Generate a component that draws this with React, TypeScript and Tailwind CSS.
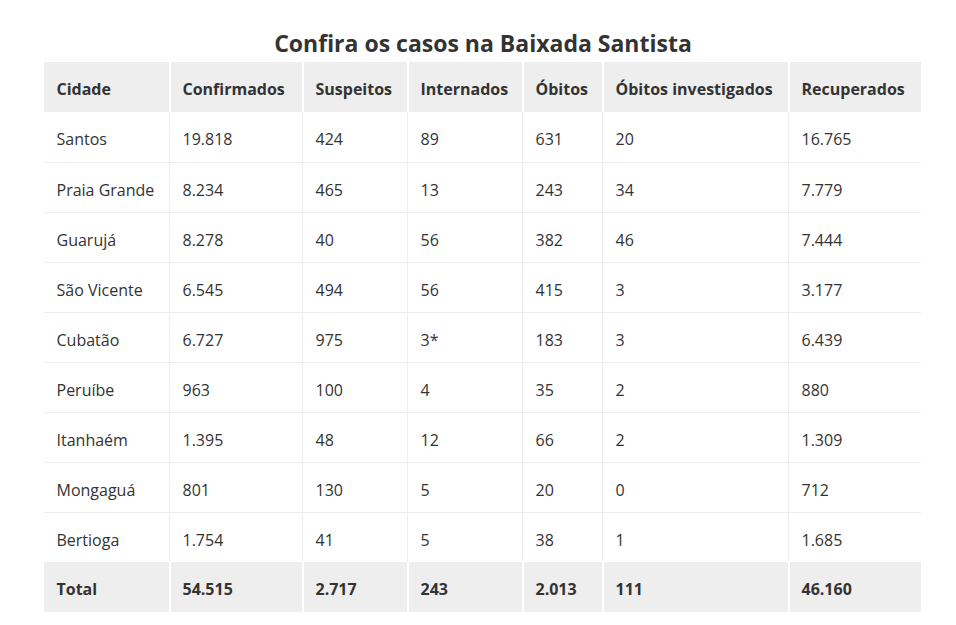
const headers = ["Cidade", "Confirmados", "Suspeitos", "Internados", "Óbitos", "Óbitos investigados", "Recuperados"];
const widths = [125, 133, 105, 115, 80, 186, 133];

const rows = [
  ["Santos", "19.818", "424", "89", "631", "20", "16.765"],
  ["Praia Grande", "8.234", "465", "13", "243", "34", "7.779"],
  ["Guarujá", "8.278", "40", "56", "382", "46", "7.444"],
  ["São Vicente", "6.545", "494", "56", "415", "3", "3.177"],
  ["Cubatão", "6.727", "975", "3*", "183", "3", "6.439"],
  ["Peruíbe", "963", "100", "4", "35", "2", "880"],
  ["Itanhaém", "1.395", "48", "12", "66", "2", "1.309"],
  ["Mongaguá", "801", "130", "5", "20", "0", "712"],
  ["Bertioga", "1.754", "41", "5", "38", "1", "1.685"],
];

const total = ["Total", "54.515", "2.717", "243", "2.013", "111", "46.160"];

export default function App() {
  return (
    <div className="min-h-[625px] bg-white font-['Open_Sans',sans-serif] text-[#333]">
      <div className="flex flex-col items-center pt-[27px]">
        <h2 className="text-[23px] leading-8 font-bold text-[#333] mb-[3px] translate-x-[5px]">
          Confira os casos na Baixada Santista
        </h2>
        <table className="table-fixed border-separate border-spacing-0 w-[877px] ml-[8px] text-[16px]">
          <colgroup>
            {widths.map((w, i) => (
              <col key={i} style={{ width: w }} />
            ))}
          </colgroup>
          <thead>
            <tr className="bg-[#eeeeee]">
              {headers.map((h, i) => (
                <th
                  key={i}
                  className={`h-[50px] pr-[10px] pt-[4px] text-left font-bold whitespace-nowrap ${i > 0 ? "pl-[12px] border-l-2 border-white" : "pl-[13px]"}`}
                >
                  {h}
                </th>
              ))}
            </tr>
          </thead>
          <tbody>
            {rows.map((r, ri) => (
              <tr key={ri}>
                {r.map((c, i) => (
                  <td
                    key={i}
                    className={`h-[50px] pl-[13px] pr-[10px] pt-[4px] whitespace-nowrap text-[#333] ${ri > 0 ? "border-t border-[#eeeeee]" : ""} ${i > 0 ? "border-l border-[#eeeeee]" : ""}`}
                  >
                    {c}
                  </td>
                ))}
              </tr>
            ))}
            <tr className="bg-[#eeeeee]">
              {total.map((c, i) => (
                <td
                  key={i}
                  className={`h-[50px] pr-[10px] pt-[4px] font-bold whitespace-nowrap ${i > 0 ? "pl-[12px] border-l-2 border-white" : "pl-[13px]"}`}
                >
                  {c}
                </td>
              ))}
            </tr>
          </tbody>
        </table>
      </div>
    </div>
  );
}
